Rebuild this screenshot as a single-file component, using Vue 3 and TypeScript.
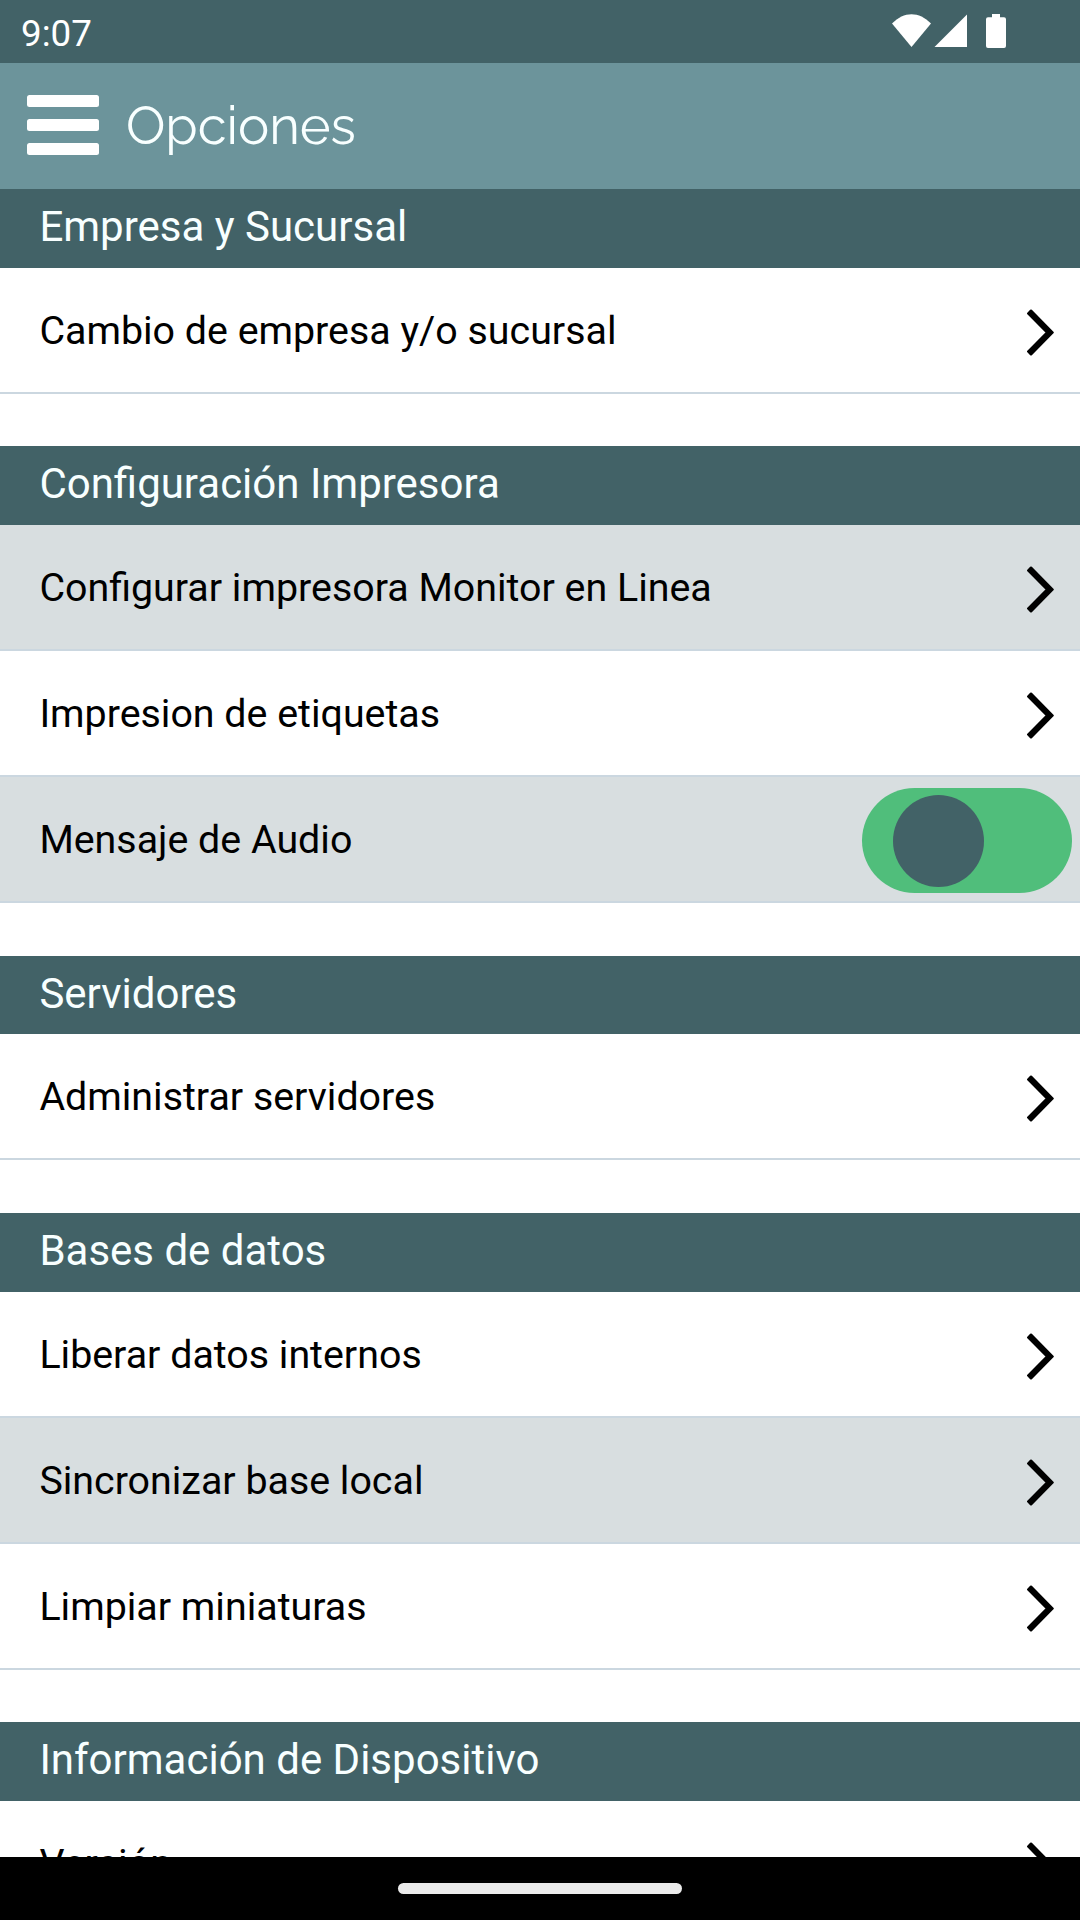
<script setup lang="ts">
import { ref } from 'vue'

interface Option {
  label: string
  shaded?: boolean
  toggle?: boolean
}

interface Section {
  title: string
  options: Option[]
}

const audio = ref(true)

const sections: Section[] = [
  { title: 'Empresa y Sucursal', options: [{ label: 'Cambio de empresa y/o sucursal' }] },
  {
    title: 'Configuración Impresora',
    options: [
      { label: 'Configurar impresora Monitor en Linea', shaded: true },
      { label: 'Impresion de etiquetas' },
      { label: 'Mensaje de Audio', shaded: true, toggle: true },
    ],
  },
  { title: 'Servidores', options: [{ label: 'Administrar servidores' }] },
  {
    title: 'Bases de datos',
    options: [
      { label: 'Liberar datos internos' },
      { label: 'Sincronizar base local', shaded: true },
      { label: 'Limpiar miniaturas' },
    ],
  },
  { title: 'Información de Dispositivo', options: [{ label: 'Versión' }] },
]
</script>

<template>
  <div class="screen">
    <div class="status">
      <span class="clock">9:07</span>
      <svg class="status-icons" width="116" height="36" viewBox="0 0 116 36" fill="#fff">
        <path d="M0 9.5 C12 -3 27 -3 39 9.5 L19.5 33 Z" />
        <path d="M42.5 33 H75 V0.5 Z" />
        <path d="M100 0 h8 v3.3 h4 a2 2 0 0 1 2 2 V32 a2 2 0 0 1 -2 2 H96 a2 2 0 0 1 -2 -2 V5.3 a2 2 0 0 1 2 -2 h4 z" />
      </svg>
    </div>

    <header class="header">
      <button class="menu" type="button" aria-label="Menú">
        <span class="bar"></span>
        <span class="bar"></span>
        <span class="bar"></span>
      </button>
      <h1 class="title">Opciones</h1>
    </header>

    <main class="content">
      <section v-for="section in sections" :key="section.title" class="section">
        <h2 class="section-title">{{ section.title }}</h2>
        <div
          v-for="option in section.options"
          :key="option.label"
          class="row"
          :class="{ shaded: option.shaded }"
        >
          <span class="label">{{ option.label }}</span>
          <span v-if="option.toggle" class="toggle" :class="{ on: audio }" @click="audio = !audio">
            <span class="knob"></span>
          </span>
          <svg v-else class="chevron" width="28" height="47" viewBox="0 0 28 47">
            <path d="M4 1.7 L25.6 23.5 L4 45.3 L1.2 42.5 L20 23.5 L1.2 4.5 Z" />
          </svg>
        </div>
      </section>
    </main>

    <footer class="navbar"><span class="pill"></span></footer>
  </div>
</template>

<style>
body {
  margin: 0;
}
</style>

<style scoped>
.screen {
  display: flex;
  flex-direction: column;
  width: 1080px;
  height: 1920px;
  overflow: hidden;
  background: #fff;
  font-family: Roboto, 'Liberation Sans', sans-serif;
}

.status {
  display: flex;
  flex: none;
  justify-content: space-between;
  height: 63px;
  box-sizing: border-box;
  padding: 0 72px 0 21px;
  background: #426267;
}

.clock {
  color: #fff;
  font-size: 36.75px;
  line-height: 67px;
}

.status-icons {
  margin-top: 14px;
}

.header {
  display: flex;
  flex: none;
  align-items: center;
  height: 126px;
  padding-left: 27px;
  background: #6c949b;
}

.menu {
  display: flex;
  flex-direction: column;
  gap: 12px;
  width: 72px;
  margin: 0 27px 2px 0;
  padding: 0;
  border: 0;
  background: none;
}

.bar {
  height: 12px;
  border-radius: 2.5px;
  background: #fff;
}

.title {
  margin: 0;
  color: #f8ffff;
  font-family: Raleway, Lato, sans-serif;
  font-size: 52.5px;
  font-weight: 400;
  line-height: 126px;
}

.content {
  flex: 1;
  min-height: 0;
  overflow: hidden;
}

.section {
  margin-bottom: 52.5px;
}

.section-title {
  box-sizing: border-box;
  height: 78.75px;
  margin: 0;
  padding-left: 39.375px;
  background: #426267;
  color: #f8ffff;
  font-size: 42px;
  font-weight: 400;
  line-height: 75px;
}

.row {
  display: flex;
  align-items: center;
  justify-content: space-between;
  box-sizing: border-box;
  height: 126px;
  padding-left: 39.375px;
  border-bottom: 2px solid #cbd7e0;
  background: #fff;
}

.row.shaded {
  background: #d8dee0;
}

.label {
  padding-top: 1.28px;
  color: #000;
  font-size: 39.375px;
}

.chevron {
  margin: 5.2px 25px 0 0;
  fill: #000;
  stroke: #000;
  stroke-width: 2.4;
  stroke-linejoin: round;
}

.toggle {
  display: flex;
  align-items: center;
  box-sizing: border-box;
  width: 210px;
  height: 105px;
  margin: 3px 8px 0 0;
  padding-left: 31px;
  border-radius: 52.5px;
  background: #9aa6a9;
}

.toggle.on {
  background: #50be7b;
}

.knob {
  width: 91px;
  height: 92px;
  border-radius: 50%;
  background: #426267;
}

.navbar {
  display: flex;
  flex: none;
  align-items: center;
  justify-content: center;
  height: 63px;
  background: #000;
}

.pill {
  width: 284px;
  height: 11px;
  border-radius: 5.5px;
  background: #ebebeb;
}
</style>
